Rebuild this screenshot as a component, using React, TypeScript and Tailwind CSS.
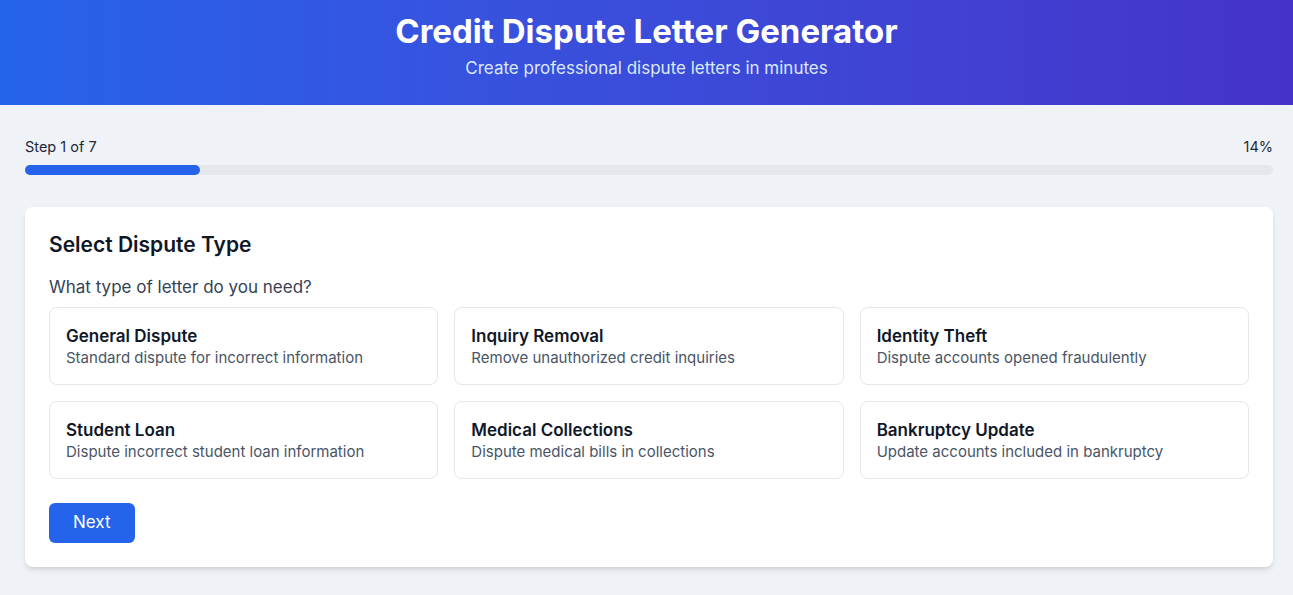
const OPTIONS = [
  { title: 'General Dispute', desc: 'Standard dispute for incorrect information' },
  { title: 'Inquiry Removal', desc: 'Remove unauthorized credit inquiries' },
  { title: 'Identity Theft', desc: 'Dispute accounts opened fraudulently' },
  { title: 'Student Loan', desc: 'Dispute incorrect student loan information' },
  { title: 'Medical Collections', desc: 'Dispute medical bills in collections' },
  { title: 'Bankruptcy Update', desc: 'Update accounts included in bankruptcy' },
]

function OptionCard({ title, desc }: { title: string; desc: string }) {
  return (
    <button className="flex flex-col rounded-lg border border-gray-200 bg-white p-4 text-left">
      <span className="text-[17px] leading-6 font-semibold text-gray-900">{title}</span>
      <span className="text-[15px] leading-5 text-gray-600">{desc}</span>
    </button>
  )
}

export default function App() {
  const step = 1
  const total = 7
  const pct = Math.round((step / total) * 100)
  return (
    <div className="min-h-screen bg-[#eff2f7] font-['Inter',sans-serif]">
      <header className="bg-gradient-to-r from-[#2563eb] to-[#4533c9] pt-[11px] pb-[23px] text-center text-white">
        <h1 className="text-[33px] leading-10 font-bold">Credit Dispute Letter Generator</h1>
        <p className="mt-[3px] text-[17px] leading-7 text-blue-100">Create professional dispute letters in minutes</p>
      </header>

      <main className="pt-8 pr-[20px] pl-[25px]">
        <div className="mb-8">
          <div className="mb-2 flex justify-between text-[14.5px] leading-5 text-gray-800">
            <span>Step {step} of {total}</span>
            <span>{pct}%</span>
          </div>
          <div className="h-2.5 w-full rounded-full bg-gray-200">
            <div className="h-2.5 rounded-full bg-[#2563eb]" style={{ width: `${pct}%` }} />
          </div>
        </div>

        <section className="rounded-lg bg-white p-6 shadow-md">
          <h2 className="mb-4 text-[21px] leading-7 font-semibold text-gray-900">Select Dispute Type</h2>
          <p className="mb-2 text-[17px] leading-6 text-gray-700">What type of letter do you need?</p>
          <div className="grid grid-cols-3 gap-4">
            {OPTIONS.map((o) => (
              <OptionCard key={o.title} {...o} />
            ))}
          </div>
          <button className="mt-6 h-10 rounded-md bg-[#2563eb] px-6 text-[17px] text-white">Next</button>
        </section>
      </main>
    </div>
  )
}
